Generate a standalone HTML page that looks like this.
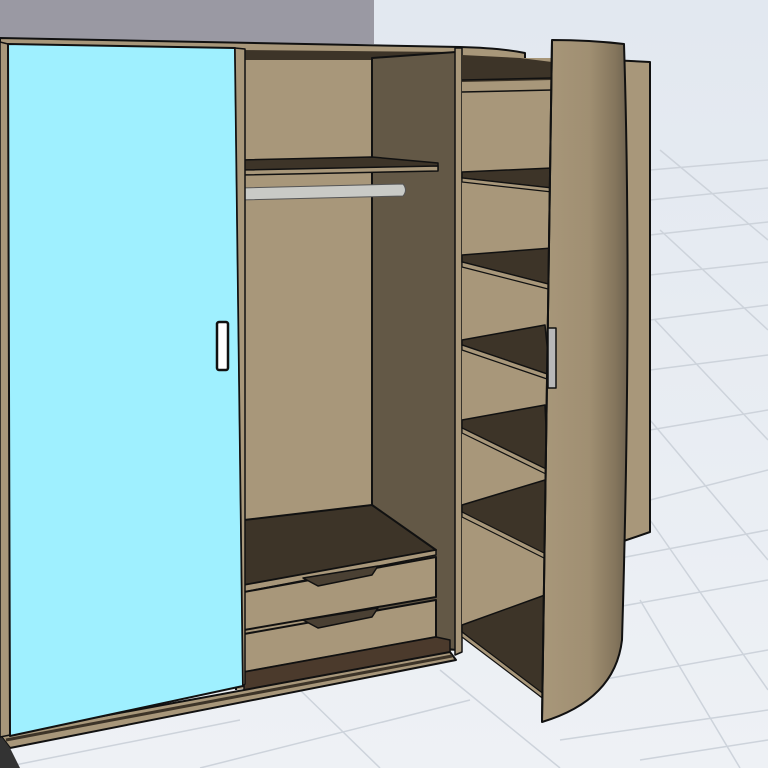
<!DOCTYPE html>
<html><head><meta charset="utf-8"><style>html,body{margin:0;padding:0;width:768px;height:768px;overflow:hidden;background:#e6ebf1}</style></head>
<body>
<svg width="768" height="768" viewBox="0 0 768 768" xmlns="http://www.w3.org/2000/svg" stroke-linejoin="round">
<defs>
<linearGradient id="door" x1="0" x2="1" y1="0" y2="0">
<stop offset="0" stop-color="#a8977a"/><stop offset="0.55" stop-color="#a08f72"/><stop offset="0.85" stop-color="#85765d"/><stop offset="1" stop-color="#6e6250"/>
</linearGradient>
<linearGradient id="sky" x1="0" x2="0" y1="0" y2="1">
<stop offset="0" stop-color="#e2e8f0"/><stop offset="1" stop-color="#eef1f5"/>
</linearGradient>
</defs>
<rect width="768" height="768" fill="url(#sky)"/>
<g stroke="#cdd3db" stroke-width="1.5" fill="none">
<path d="M650 170 L768 160 M650 200 L768 188 M650 235 L768 222 M650 275 L768 262 M650 320 L768 305 M650 370 L768 355 M650 430 L768 410 M650 500 L768 470 M610 560 L768 530 M600 610 L768 580 M600 680 L768 650 M560 740 L768 710"/>
<path d="M660 150 L768 240 M660 230 L768 330 M655 320 L768 440 M650 420 L768 560 M650 520 L768 690 M640 600 L740 768 M300 690 L380 768 M440 670 L560 768 M640 760 L768 740"/>
<path d="M0 768 L240 720 M200 768 L470 700"/>
</g>
<rect x="0" y="0" width="374" height="44" fill="#9a99a3"/>
<path d="M0 38 L460 47 Q500 48 525 53 L525 60 L0 50 Z" fill="#a8977a" stroke="#111" stroke-width="2"/>
<path d="M610 60 L650 62 L650 532 L612 545 Z" fill="#a8977a" stroke="#111" stroke-width="2"/>
<!-- left compartment back -->
<path d="M236 50 L456 50 L456 650 L236 690 Z" fill="#a8977a"/>
<path d="M237 50 L456 52 L456 58 L372 60 L237 60 Z" fill="#3d3428"/>
<path d="M372 58 L456 52 L456 650 L372 640 Z" fill="#635846" stroke="#111" stroke-width="2"/>
<path d="M240 160 L372 157 L438 163 L438 170 L240 174 Z" fill="#3d3428" stroke="#111" stroke-width="1.5"/>
<path d="M240 170 L438 166 L438 171 L240 175 Z" fill="#a8977a" stroke="#111" stroke-width="1.5"/>
<path d="M240 188 L403 184 Q408 190 403 196 L240 200 Z" fill="#c9cac6" stroke="#555" stroke-width="1"/>
<path d="M244 520 L372 505 L436 550 L244 585 Z" fill="#3d3428" stroke="#111" stroke-width="2"/>
<path d="M244 585 L436 550 L436 555 L244 592 Z" fill="#a8977a" stroke="#111" stroke-width="1.5"/>
<path d="M244 592 L436 557 L436 597 L244 630 Z" fill="#a8977a" stroke="#111" stroke-width="2"/>
<path d="M303 578 L378 566 L372 575 L318 586 Z" fill="#4a4033" stroke="#111" stroke-width="1.5"/>
<path d="M244 634 L436 600 L436 637 L244 672 Z" fill="#a8977a" stroke="#111" stroke-width="2"/>
<path d="M303 620 L378 608 L372 617 L318 628 Z" fill="#4a4033" stroke="#111" stroke-width="1.5"/>
<path d="M244 672 L436 637 L450 640 L450 652 L244 690 Z" fill="#4b3a2c" stroke="#111" stroke-width="1.5"/>
<line x1="236" y1="50" x2="236" y2="690" stroke="#111" stroke-width="2"/>
<path d="M455 48 L462 48 L462 652 L455 655 Z" fill="#a8977a" stroke="#111" stroke-width="1.5"/>
<!-- right compartment -->
<path d="M462 58 L552 58 L552 700 L462 637 Z" fill="#a8977a"/>
<path d="M462 55 L520 58 L552 62 L552 80 L462 82 Z" fill="#3d3428"/>
<g fill="#3d3428" stroke="#111" stroke-width="1.5">
<path d="M462 172 L552 168 L552 188 L462 178 Z"/>
<path d="M462 255 L552 248 L552 285 L462 262 Z"/>
<path d="M462 340 L545 325 L550 375 L462 345 Z"/>
<path d="M462 420 L545 405 L548 470 L462 428 Z"/>
<path d="M462 505 L545 480 L548 560 L462 512 Z"/>
<path d="M462 625 L545 595 L545 700 L462 632 Z"/>
</g>
<g fill="#a8977a" stroke="#111" stroke-width="1.2">
<path d="M462 178 L552 188 L552 192 L462 182 Z"/>
<path d="M462 262 L552 285 L552 290 L462 267 Z"/>
<path d="M462 345 L550 375 L550 380 L462 350 Z"/>
<path d="M462 428 L548 470 L548 475 L462 433 Z"/>
<path d="M462 512 L548 555 L548 560 L462 517 Z"/>
<path d="M462 632 L545 695 L545 700 L462 637 Z"/>
</g>
<path d="M462 92 L552 90 M462 80 L552 78" stroke="#111" stroke-width="1.5"/>
<path d="M552 40 Q590 40 624 44 Q632 300 622 640 Q615 700 542 722 L542 720 Z" fill="url(#door)" stroke="#111" stroke-width="2"/>
<path d="M552 40 L542 722" stroke="#111" stroke-width="2"/>
<rect x="548" y="328" width="8" height="60" fill="#b8b8b8" stroke="#111" stroke-width="1.5"/>
<path d="M0 735 L450 652 L456 660 L10 748 Z" fill="#a8977a" stroke="#111" stroke-width="2"/>
<path d="M6 740 L452 656" stroke="#3d3428" stroke-width="3"/>
<path d="M0 735 L10 748 L20 768 L0 768 Z" fill="#333"/>
<path d="M0 42 L8 44 L10 735 L0 737 Z" fill="#a8977a" stroke="#111" stroke-width="1.5"/>
<path d="M8 44 L235 48 L243 686 L10 736 Z" fill="#9ff0ff" stroke="#111" stroke-width="2"/>
<path d="M235 48 L245 49 L245 684 L243 686 Z" fill="#a8977a" stroke="#111" stroke-width="1.5"/>
<rect x="217" y="322" width="11" height="48" rx="2" fill="#fff" stroke="#111" stroke-width="2.5"/>
</svg>
</body></html>
